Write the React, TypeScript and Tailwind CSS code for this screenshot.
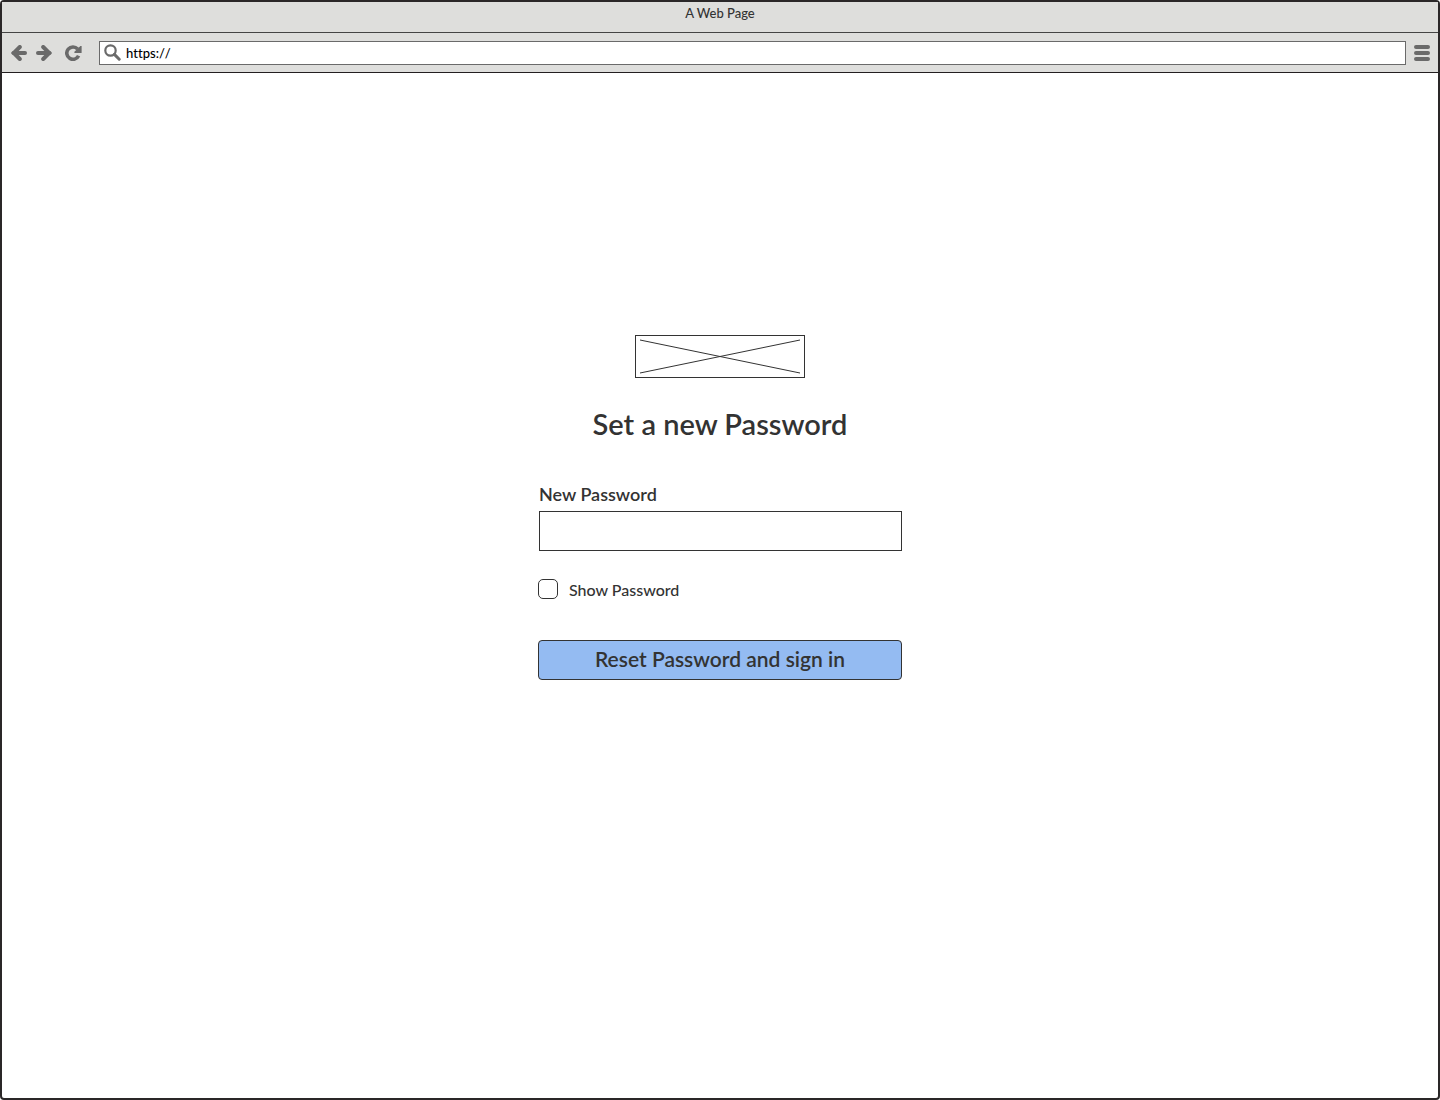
import { useState } from "react";

function ArrowLeft() {
  return (
    <svg viewBox="0 0 16 16" className="size-4" fill="none" stroke="currentColor" strokeWidth="4" aria-hidden="true">
      <path d="M2.5 8H14" strokeLinecap="round" />
      <path d="M8.8 2 2.8 8l6 6" strokeLinecap="round" strokeLinejoin="miter" />
    </svg>
  );
}

function ArrowRight() {
  return (
    <svg viewBox="0 0 16 16" className="size-4" fill="none" stroke="currentColor" strokeWidth="4" aria-hidden="true">
      <path d="M13.5 8H2" strokeLinecap="round" />
      <path d="m7.2 2 6 6-6 6" strokeLinecap="round" strokeLinejoin="miter" />
    </svg>
  );
}

function Reload() {
  return (
    <svg viewBox="0 0 17 16" className="h-4 w-[17px]" aria-hidden="true">
      <path d="M12.6 4A6.2 6.2 0 1 0 13.6 10.8" fill="none" stroke="currentColor" strokeWidth="3.6" />
      <path d="M16.6 1V8H9.4V6.8L15.4 1Z" fill="currentColor" />
    </svg>
  );
}

function Magnifier() {
  return (
    <svg viewBox="0 0 17 17" className="size-[17px] shrink-0 text-[#6a6a6a]" fill="none" stroke="currentColor" aria-hidden="true">
      <circle cx="6.5" cy="6.5" r="5.2" strokeWidth="2.2" />
      <path d="m10.4 10.4 4.8 4.8" strokeWidth="3" strokeLinecap="round" />
    </svg>
  );
}

function Bars() {
  return (
    <svg viewBox="0 0 16 16" className="size-4" fill="none" stroke="currentColor" strokeWidth="4" strokeLinecap="round" aria-hidden="true">
      <path d="M2 2h12M2 8h12M2 14h12" />
    </svg>
  );
}

export default function App() {
  const [show, setShow] = useState(false);
  return (
    <div className="flex min-h-screen flex-col rounded-sm border-2 border-[#2a2728] bg-white font-['Lato',sans-serif] font-medium text-[#333333]">
      <header className="border-b border-[#231f20] bg-[#dededc]">
        <div className="h-[31px] border-b border-[#444444] pt-[3px] text-center text-[13px] leading-4">A Web Page</div>
        <div className="flex h-[39px] items-center pr-2 pl-[9px] text-[#6a6a6a]">
          <button type="button" aria-label="Back"><ArrowLeft /></button>
          <button type="button" aria-label="Forward" className="ml-[9px]"><ArrowRight /></button>
          <button type="button" aria-label="Reload" className="ml-[13px]"><Reload /></button>
          <div className="mr-2 ml-[17px] flex h-6 flex-1 items-center gap-[5px] border border-[#6a6a6a] bg-white pl-1">
            <Magnifier />
            <input
              type="text"
              aria-label="Address"
              defaultValue="https://"
              className="min-w-0 flex-1 bg-transparent text-[13px] leading-4 text-black outline-none [font-kerning:none] [font-variant-ligatures:none]"
            />
          </div>
          <button type="button" aria-label="Menu"><Bars /></button>
        </div>
      </header>
      <main className="flex flex-1 flex-col items-center px-4 pt-[262px] pb-8">
        <svg viewBox="0 0 170 43" className="h-[43px] w-[170px]" fill="none" stroke="#333333" role="img" aria-label="Logo">
          <rect x="0.5" y="0.5" width="169" height="42" />
          <path d="M5 5l160 33M165 5L5 38" />
        </svg>
        <h1 className="mt-7 text-center text-[29px] leading-9 font-semibold">Set a new Password</h1>
        <form className="mt-10 flex w-full max-w-[364px] flex-col" onSubmit={(e) => e.preventDefault()}>
          <div className="flex flex-col gap-[5px] pl-px">
            <label htmlFor="password" className="text-lg leading-6 font-semibold">New Password</label>
            <input
              id="password"
              type={show ? "text" : "password"}
              className="h-10 w-full border border-[#333333] bg-white px-2 text-lg outline-none"
            />
          </div>
          <div className="mt-[27px] flex items-center gap-[11px]">
            <input
              id="show"
              type="checkbox"
              checked={show}
              onChange={(e) => setShow(e.target.checked)}
              className="size-5 appearance-none rounded-[5px] border border-[#333333] bg-white checked:bg-[#94bbf2]"
            />
            <label htmlFor="show" className="pt-0.5 text-base leading-5">Show Password</label>
          </div>
          <button type="submit" className="mt-10 h-10 rounded border border-[#333333] bg-[#94bbf2] pb-0.5 text-[21px] leading-6 font-semibold">
            Reset Password and sign in
          </button>
        </form>
      </main>
    </div>
  );
}
